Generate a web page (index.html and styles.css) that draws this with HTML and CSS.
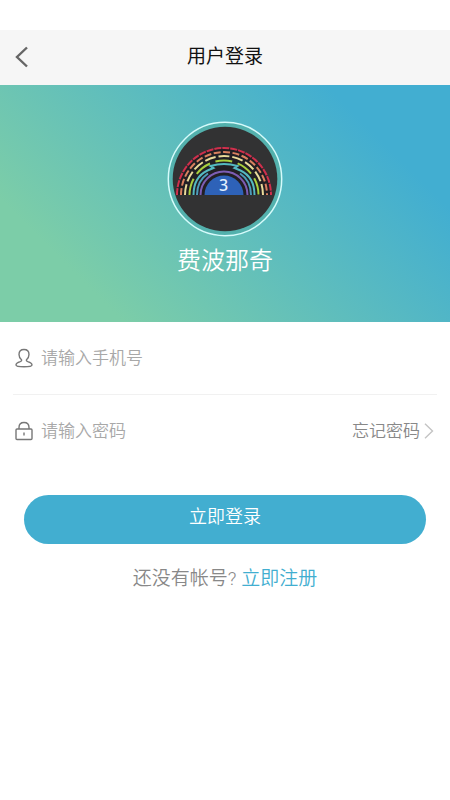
FILE: index.html
```html
<!DOCTYPE html>
<html lang="zh-CN">
<head>
<meta charset="utf-8">
<meta name="viewport" content="width=device-width, initial-scale=1">
<title>用户登录</title>
<link rel="stylesheet" href="styles.css">
</head>
<body>
<header class="bar">
  <button class="back" type="button" aria-label="返回">
    <svg width="14" height="22" viewBox="0 0 14 22"><path d="M13 1.500 3 11 13 20.500"/></svg>
  </button>
  <h1 class="title">用户登录</h1>
</header>
<main>
  <section class="hero">
    <svg class="avatar" width="116" height="116" viewBox="0 0 116 116" aria-hidden="true">
      <circle class="ring" cx="58" cy="58" r="56.7"/>
      <circle class="disc" cx="58" cy="58" r="52.3"/>
      <path class="shade" d="M10 74a47 47 0 0 1 94 0z"/>
      <g class="arcs">
        <path class="red" d="M10 74a47 47 0 0 1 94 0"/>
        <path class="orange" d="M14 74a43 43 0 0 1 86 0"/>
        <path class="cream" d="M18 74a39 39 0 0 1 78 0"/>
        <path class="lime" d="M22.500 74a34.500 34.500 0 0 1 69 0"/>
        <path class="teal" d="M26.500 74c0-11 4.500-20 14-24.500l6-2.500-3-2q13.500-4 27 0l-3 2 6 2.500c9.500 4.500 14 13.500 14 24.500"/>
        <path class="blue" d="M30 74c0-9 4-17 11-21.500M84 74c0-9-4-17-11-21.500"/>
        <path class="violet" d="M33.500 74a23.500 23.500 0 0 1 47 0"/>
      </g>
      <path class="core" d="M37.500 74a19.500 19.500 0 0 1 39 0z"/>
      <text class="digit" x="56.500" y="70" text-anchor="middle">3</text>
    </svg>
    <p class="name">费波那奇</p>
  </section>
  <form class="form">
    <div class="field">
      <label class="icon" for="phone" aria-label="手机号">
        <svg width="18" height="20" viewBox="0 0 18 20"><path d="M9 1.500c-3 0-5 2-5 5 0 2.200 1 4 2.500 5.200.4 1-.2 1.500-1.300 1.900C2.500 14.500 1 15.300 1 17c0 1.200 3 1.800 8 1.800s8-.6 8-1.800c0-1.700-1.500-2.500-4.200-3.400-1.100-.4-1.700-.9-1.300-1.900C13 10.500 14 8.700 14 6.500c0-3-2-5-5-5z"/></svg>
      </label>
      <input id="phone" type="tel" placeholder="请输入手机号">
    </div>
    <div class="field">
      <label class="icon" for="password" aria-label="密码">
        <svg width="18" height="20" viewBox="0 0 18 20"><rect x="1" y="8" width="16" height="10.500" rx="1"/><path d="M4 8V6.500C4 3.500 6 1.500 9 1.500s5 2 5 5V8M9 11.500v3"/></svg>
      </label>
      <input id="password" type="password" placeholder="请输入密码">
      <a class="forgot" href="#">忘记密码<svg width="10" height="16" viewBox="0 0 10 16"><path d="M1 .8 8.500 8 1 15.200"/></svg></a>
    </div>
    <button class="submit" type="submit">立即登录</button>
    <p class="register">还没有帐号? <a href="#">立即注册</a></p>
  </form>
</main>
</body>
</html>
```
FILE: styles.css
```css
* {
  box-sizing: border-box;
}

body {
  margin: 0;
  padding-top: 30px;
  background: #fff;
  color: #888;
  font-family: Roboto, "Noto Sans CJK SC", sans-serif;
  font-weight: 350;
}

svg {
  display: block;
  fill: none;
}

a {
  text-decoration: none;
}

.bar {
  display: grid;
  grid-template-columns: 48px 1fr 48px;
  align-items: center;
  height: 55px;
  padding-bottom: 2px;
  background: #f6f6f6;
}

.back {
  padding: 0 14px;
  border: 0;
  background: none;
}

.back path {
  stroke: #666;
  stroke-width: 2.4;
}

.title {
  margin: 0;
  color: #111;
  font-size: 19px;
  font-weight: 400;
  line-height: 28px;
  text-align: center;
}

.hero {
  display: flex;
  flex-direction: column;
  align-items: center;
  padding: 36px 0 43px;
  background: linear-gradient(45deg, #7ccda8 18%, #42aed1 82%);
}

.name {
  margin: 6px 0 0;
  color: #fff;
  font-size: 24px;
  line-height: 36px;
}

.ring {
  fill: #53b1ad;
  stroke: #d5fbfb;
  stroke-width: 1.5;
}

.disc {
  fill: #323233;
}

.shade {
  fill: #221f24;
}

.arcs path {
  stroke-width: 2;
}

.arcs .red {
  stroke: #cf2f4c;
  stroke-dasharray: 7 1;
}

.arcs .orange {
  stroke: #d9805f;
  stroke-dasharray: 7 2.500;
}

.arcs .cream {
  stroke: #eadb9a;
  stroke-dasharray: 11 2.900;
}

.arcs .lime {
  stroke: #a9cf3e;
  stroke-dasharray: 17 5.700;
}

.arcs .teal {
  stroke: #54b9c0;
}

.arcs .blue {
  stroke: #4c9cba;
}

.arcs .violet {
  stroke: #7d5db4;
}

.core {
  fill: #2e62b8;
}

.digit {
  fill: #e4f1ff;
  font: 500 16px "Noto Sans", sans-serif;
}

.form {
  display: flex;
  flex-direction: column;
}

.field {
  display: flex;
  align-items: center;
  height: 72px;
  margin: 0 13px;
  padding-left: 2px;
}

.field + .field {
  height: 73px;
  border-top: 1px solid #f1f1f1;
}

.icon path,
.icon rect {
  stroke: #777;
  stroke-width: 1.4;
}

.field input {
  flex: 1;
  min-width: 0;
  margin-left: 8px;
  padding: 0;
  border: 0;
  outline: 0;
  background: none;
  color: #555;
  font: inherit;
  font-size: 17px;
  line-height: 24px;
}

.field input::placeholder {
  color: #a8a8a8;
}

.forgot {
  display: flex;
  align-items: center;
  gap: 4px;
  padding-right: 3px;
  color: #888;
  font-size: 17px;
  line-height: 24px;
}

.forgot path {
  stroke: #c4c4c4;
  stroke-width: 1.4;
}

.submit {
  height: 49px;
  margin: 28px 24px 0;
  padding: 0 0 6px;
  border: 0;
  border-radius: 25px;
  background: #42aed0;
  color: #fff;
  font: inherit;
  font-size: 18px;
  line-height: 24px;
}

.register {
  margin: 21px 0 0;
  font-size: 19px;
  line-height: 28px;
  text-align: center;
}

.register a {
  color: #42aed0;
}
```
